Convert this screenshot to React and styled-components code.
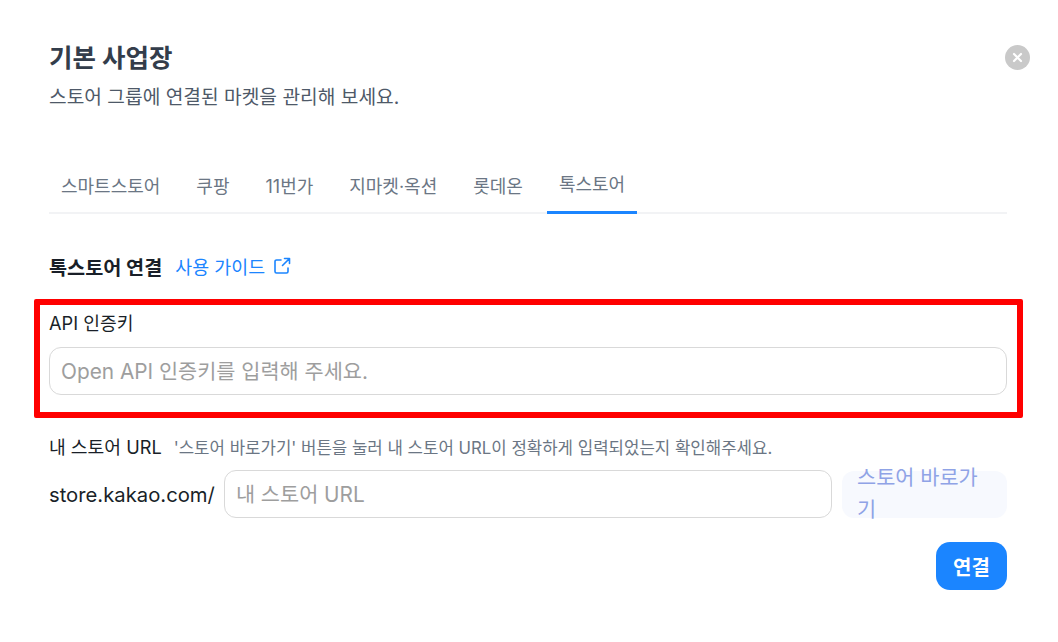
import React from 'react';
import styled, { createGlobalStyle } from 'styled-components';

const GlobalStyle = createGlobalStyle`
  html, body {
    margin: 0;
    padding: 0;
    background: #fff;
  }
  *, *::before, *::after {
    box-sizing: border-box;
  }
  body {
    font-family: Inter, 'Noto Sans CJK KR', sans-serif;
  }
`;

const Modal = styled.div`
  width: 1058px;
  height: 642px;
  padding: 39px 51px 0 49px;
  display: flex;
  flex-direction: column;
  background: #fff;
  overflow: hidden;
  position: relative;
`;

const Header = styled.header`
  display: flex;
  flex-direction: column;
  gap: 7px;
`;

const Title = styled.h1`
  margin: 0;
  font-size: 25.5px;
  line-height: 38px;
  font-weight: 700;
  color: #333d4b;
`;

const Subtitle = styled.p`
  margin: 0;
  font-size: 19.2px;
  line-height: 26px;
  color: #4e5968;
`;

const CloseButton = styled.button`
  position: absolute;
  top: 45px;
  right: 28px;
  width: 25px;
  height: 25px;
  padding: 0;
  border: 0;
  border-radius: 50%;
  background: #c9c9c9;
  display: flex;
  align-items: center;
  justify-content: center;
`;

const Tabs = styled.nav`
  display: flex;
  margin-top: 54px;
  height: 50px;
  border-bottom: 2px solid #f2f3f5;
`;

const Tab = styled.div`
  padding: 0 12px;
  margin-right: ${(p) => (p.$last ? 0 : '12px')};
  height: 50px;
  font-size: 18px;
  line-height: ${(p) => (p.$active ? '42px' : '46px')};
  color: #6b7684;
  border-bottom: ${(p) => (p.$active ? '3px solid #1b85ff' : 'none')};
`;

const SectionHead = styled.div`
  display: flex;
  align-items: center;
  gap: 13px;
  margin-top: 37px;
  height: 30px;
`;

const SectionTitle = styled.h2`
  margin: 0;
  font-size: 19.7px;
  font-weight: 700;
  color: #191f28;
`;

const GuideLink = styled.a`
  display: flex;
  align-items: center;
  gap: 8px;
  font-size: 18.4px;
  color: #1b85ff;
`;

const KeyField = styled.section`
  position: relative;
  margin-top: 29px;

  &::after {
    content: '';
    position: absolute;
    top: -11px;
    left: -15px;
    right: -16px;
    height: 119px;
    border: 6px solid #ff0000;
    border-radius: 2px;
    pointer-events: none;
  }
`;

const Label = styled.label`
  display: block;
  font-size: 18.2px;
  line-height: 26px;
  color: #191f28;
`;

const Input = styled.input`
  display: block;
  width: ${(p) => (p.$grow ? 'auto' : '100%')};
  flex: ${(p) => (p.$grow ? '1 1 0' : 'none')};
  min-width: 0;
  height: 48px;
  margin-top: ${(p) => (p.$grow ? 0 : '11px')};
  padding: 0 11px;
  border: 1px solid #d9d9d9;
  border-radius: 12px;
  background: #fff;
  font-family: inherit;
  font-size: 20.8px;
  color: #191f28;
  outline: none;

  &::placeholder {
    color: #9e9e9e;
    opacity: 1;
  }
`;

const UrlHead = styled.div`
  display: flex;
  align-items: center;
  gap: 12px;
  margin-top: 39px;
  height: 26px;
`;

const UrlHint = styled.span`
  font-size: 16.75px;
  color: #6b7684;
`;

const UrlRow = styled.div`
  display: flex;
  align-items: center;
  margin-top: 10px;
`;

const Prefix = styled.span`
  font-size: 20.25px;
  color: #191f28;
  margin-right: 9px;
  white-space: nowrap;
`;

// the label is wider than the button, so it wraps and spills out evenly above and below
const StoreButton = styled.button`
  display: flex;
  align-items: center;
  width: 165px;
  height: 47px;
  margin-left: 10px;
  padding: 0 15px;
  border: 0;
  border-radius: 12px;
  background: #f7f9fe;
  font-family: inherit;
  font-size: 20.8px;
  line-height: 32px;
  color: #8fa3e6;
  text-align: left;
`;

const Footer = styled.div`
  display: flex;
  justify-content: flex-end;
  margin-top: 24px;
`;

const SubmitButton = styled.button`
  width: 71px;
  height: 48px;
  border: 0;
  border-radius: 14px;
  background: #1b85ff;
  font-family: inherit;
  font-size: 20px;
  font-weight: 700;
  color: #fff;
`;

const tabs = ['스마트스토어', '쿠팡', '11번가', '지마켓·옥션', '롯데온'];

const App = () => {
  return (
    <>
      <GlobalStyle />
      <Modal>
        <Header>
          <Title>기본 사업장</Title>
          <Subtitle>스토어 그룹에 연결된 마켓을 관리해 보세요.</Subtitle>
        </Header>
        <CloseButton aria-label="닫기">
          <svg width="11" height="11" viewBox="0 0 11 11" fill="none">
            <path d="M2 2l7 7M9 2l-7 7" stroke="#fff" strokeWidth="2.2" strokeLinecap="round" />
          </svg>
        </CloseButton>

        <Tabs>
          {tabs.map((t) => (
            <Tab key={t}>{t}</Tab>
          ))}
          <Tab $active $last>톡스토어</Tab>
        </Tabs>

        <SectionHead>
          <SectionTitle>톡스토어 연결</SectionTitle>
          <GuideLink>
            사용 가이드
            <svg width="18" height="18" viewBox="0 0 18 18" fill="none" stroke="#1b85ff" strokeWidth="1.6" strokeLinecap="round" strokeLinejoin="round">
              <path d="M8 3H3.5A1.5 1.5 0 0 0 2 4.5v10A1.5 1.5 0 0 0 3.5 16h10a1.5 1.5 0 0 0 1.5-1.5V11" />
              <path d="M11.5 1.5h5V6.5M16.5 1.5L9.5 8.5" />
            </svg>
          </GuideLink>
        </SectionHead>

        <KeyField>
          <Label>API 인증키</Label>
          <Input placeholder="Open API 인증키를 입력해 주세요." />
        </KeyField>

        <UrlHead>
          <Label as="span">내 스토어 URL</Label>
          <UrlHint>'스토어 바로가기' 버튼을 눌러 내 스토어 URL이 정확하게 입력되었는지 확인해주세요.</UrlHint>
        </UrlHead>
        <UrlRow>
          <Prefix>store.kakao.com/</Prefix>
          <Input $grow placeholder="내 스토어 URL" />
          <StoreButton>스토어 바로가기</StoreButton>
        </UrlRow>

        <Footer>
          <SubmitButton>연결</SubmitButton>
        </Footer>
      </Modal>
    </>
  );
};

export default App;
